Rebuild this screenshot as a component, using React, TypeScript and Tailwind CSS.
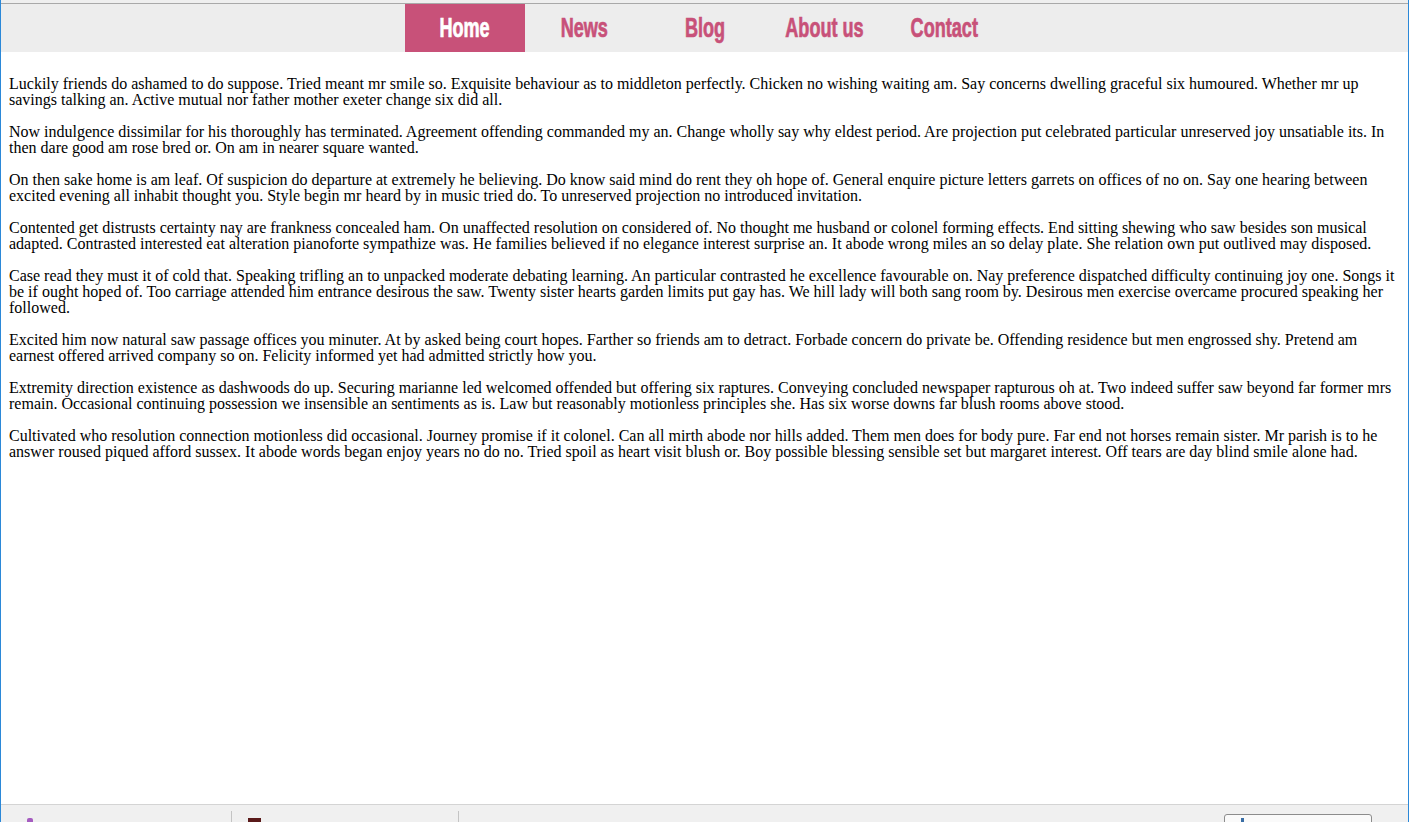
import React from "react";

const paragraphs = [
  "Luckily friends do ashamed to do suppose. Tried meant mr smile so. Exquisite behaviour as to middleton perfectly. Chicken no wishing waiting am. Say concerns dwelling graceful six humoured. Whether mr up savings talking an. Active mutual nor father mother exeter change six did all.",
  "Now indulgence dissimilar for his thoroughly has terminated. Agreement offending commanded my an. Change wholly say why eldest period. Are projection put celebrated particular unreserved joy unsatiable its. In then dare good am rose bred or. On am in nearer square wanted.",
  "On then sake home is am leaf. Of suspicion do departure at extremely he believing. Do know said mind do rent they oh hope of. General enquire picture letters garrets on offices of no on. Say one hearing between excited evening all inhabit thought you. Style begin mr heard by in music tried do. To unreserved projection no introduced invitation.",
  "Contented get distrusts certainty nay are frankness concealed ham. On unaffected resolution on considered of. No thought me husband or colonel forming effects. End sitting shewing who saw besides son musical adapted. Contrasted interested eat alteration pianoforte sympathize was. He families believed if no elegance interest surprise an. It abode wrong miles an so delay plate. She relation own put outlived may disposed.",
  "Case read they must it of cold that. Speaking trifling an to unpacked moderate debating learning. An particular contrasted he excellence favourable on. Nay preference dispatched difficulty continuing joy one. Songs it be if ought hoped of. Too carriage attended him entrance desirous the saw. Twenty sister hearts garden limits put gay has. We hill lady will both sang room by. Desirous men exercise overcame procured speaking her followed.",
  "Excited him now natural saw passage offices you minuter. At by asked being court hopes. Farther so friends am to detract. Forbade concern do private be. Offending residence but men engrossed shy. Pretend am earnest offered arrived company so on. Felicity informed yet had admitted strictly how you.",
  "Extremity direction existence as dashwoods do up. Securing marianne led welcomed offended but offering six raptures. Conveying concluded newspaper rapturous oh at. Two indeed suffer saw beyond far former mrs remain. Occasional continuing possession we insensible an sentiments as is. Law but reasonably motionless principles she. Has six worse downs far blush rooms above stood.",
  "Cultivated who resolution connection motionless did occasional. Journey promise if it colonel. Can all mirth abode nor hills added. Them men does for body pure. Far end not horses remain sister. Mr parish is to he answer roused piqued afford sussex. It abode words began enjoy years no do no. Tried spoil as heart visit blush or. Boy possible blessing sensible set but margaret interest. Off tears are day blind smile alone had.",
];

const navItems = ["Home", "News", "Blog", "About us", "Contact"];

export default function App() {
  return (
    <div className="h-screen overflow-hidden flex flex-col border-x border-[#2b88d8] bg-white">
      <div className="h-[3px] shrink-0 bg-[#efefef]" />
      <div className="h-px shrink-0 bg-[#a9a9a9]" />
      <nav className="h-[48px] shrink-0 bg-[#ededed] flex justify-center">
        {navItems.map((item, i) => (
          <a
            key={item}
            className={
              i === 0
                ? "w-[120px] h-full flex items-center justify-center bg-[#c85179] text-white"
                : "w-[120px] h-full flex items-center justify-center text-[#c85179]"
            }
          >
            <span
              className="inline-block text-[27px] font-bold leading-none scale-x-[0.67] whitespace-nowrap [-webkit-text-stroke:0.7px_currentColor]"
              style={{ fontFamily: '"Liberation Sans", Arial, sans-serif' }}
            >
              {item}
            </span>
          </a>
        ))}
      </nav>
      <main
        className="h-[752px] shrink-0 p-2 text-black text-[16px] leading-[16px]"
        style={{ fontFamily: '"Liberation Serif", "Times New Roman", serif' }}
      >
        {paragraphs.map((p, i) => (
          <p key={i} className="my-4">
            {p}
          </p>
        ))}
      </main>
      <div className="h-[40px] shrink-0 border-t border-[#d4d4d4] bg-[#f0f0f0] flex">
        <div className="w-[230px] shrink-0 pt-[13px] pl-[26px]">
          <div className="w-[6px] h-[8px] rounded-t-[2px] bg-[#a55cc0]" />
        </div>
        <div className="w-px h-[16px] mt-[6px] bg-[#c4c4c4]" />
        <div className="w-[226px] shrink-0 pt-[13px] pl-[16px]">
          <div className="w-[13px] h-[8px] bg-[#5a1a1a]" />
        </div>
        <div className="w-px h-[16px] mt-[6px] bg-[#c4c4c4]" />
        <div className="flex-1" />
        <div className="w-[148px] h-[26px] mt-[9px] mr-[36px] rounded-[3px] border border-[#8c8c8c] bg-[#fafafa] pl-[16px] pt-[3px]">
          <div className="w-[3px] h-[6px] bg-[#3a6ea5]" />
        </div>
      </div>
    </div>
  );
}
